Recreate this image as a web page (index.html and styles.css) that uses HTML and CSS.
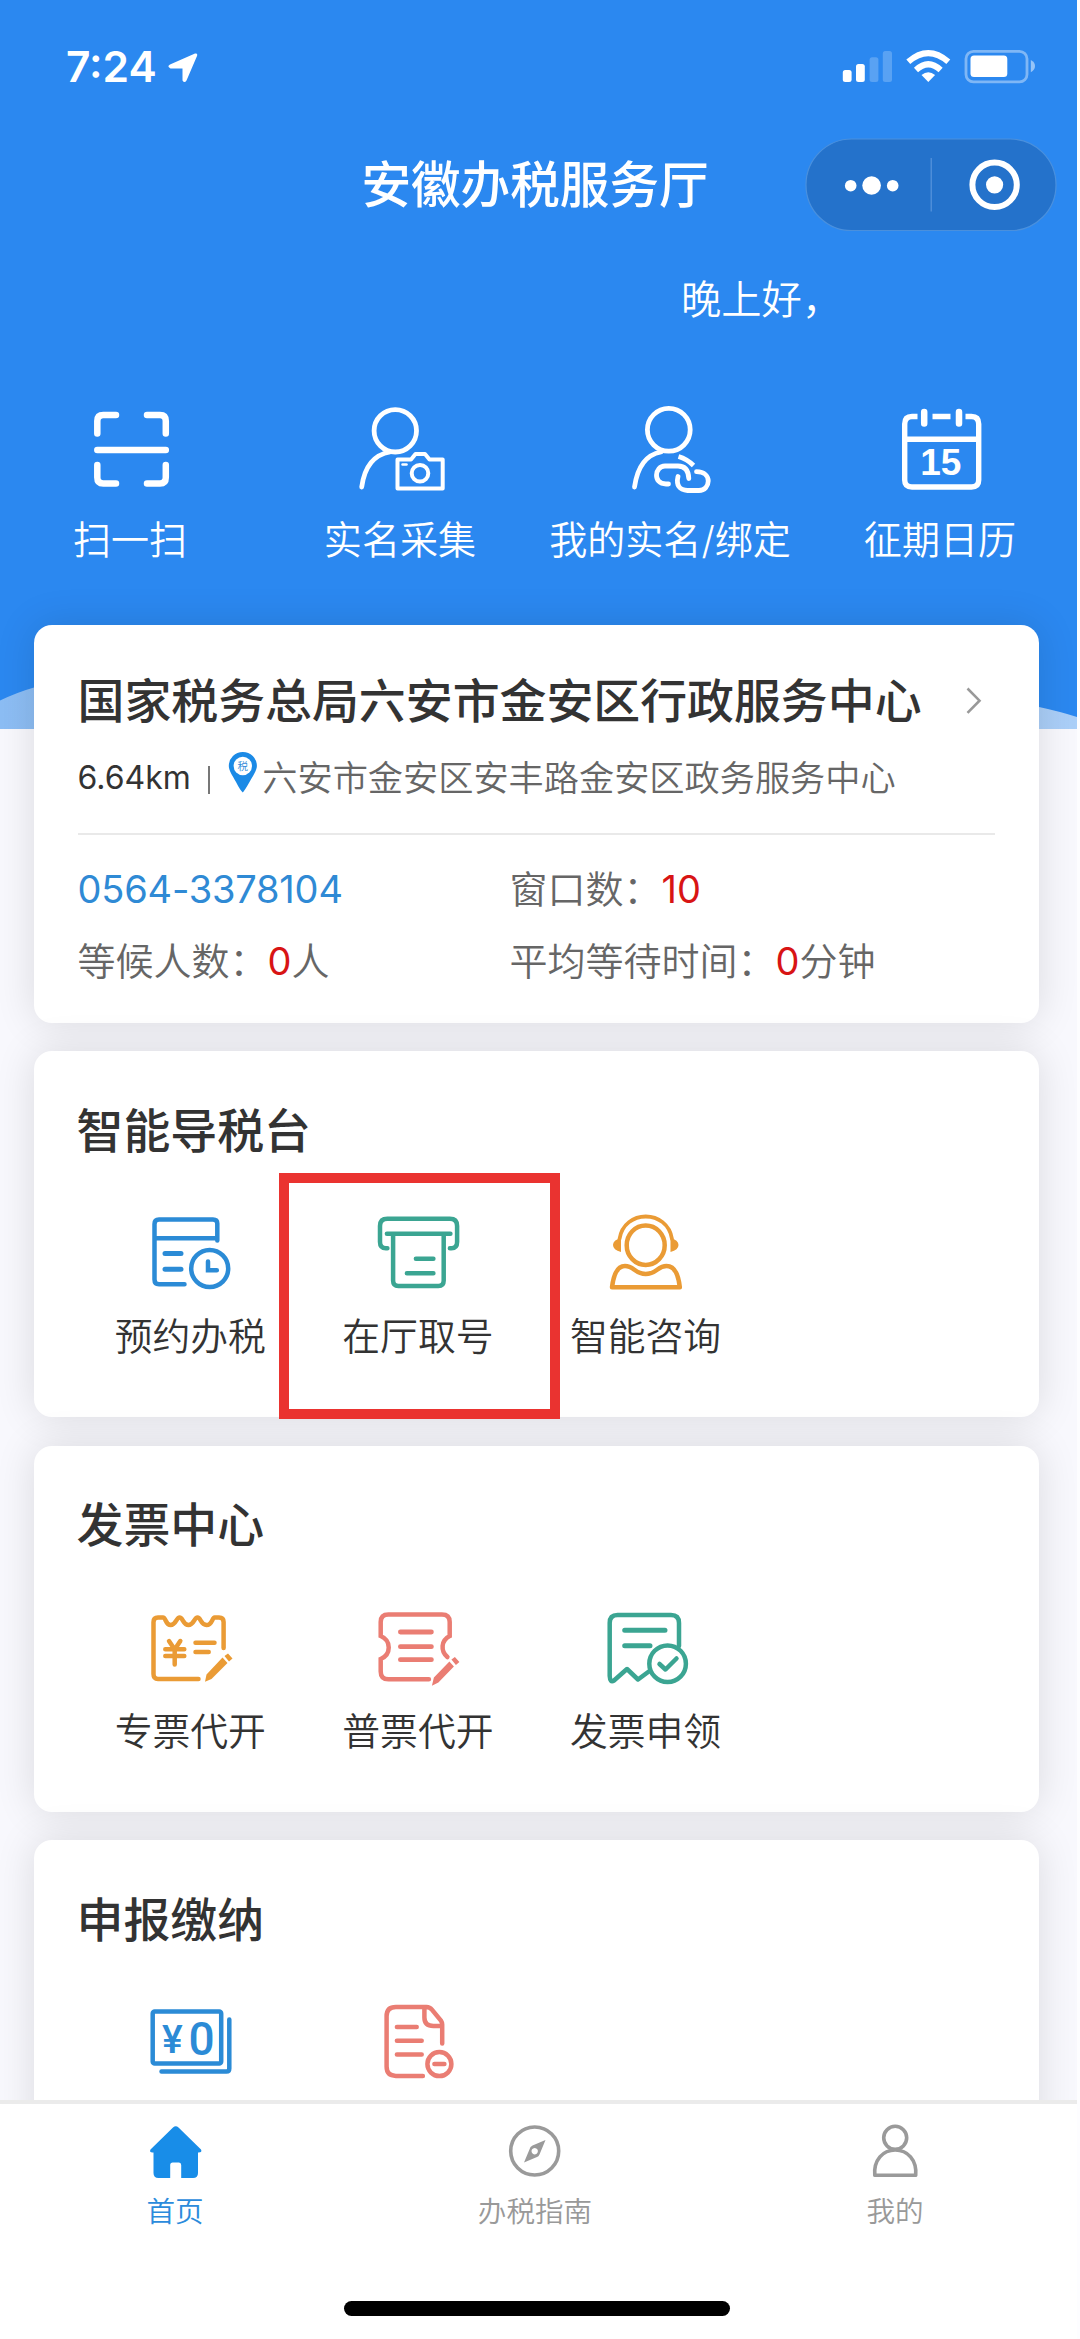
FILE: index.html
```html
<!DOCTYPE html>
<html lang="zh-CN">
<head>
<meta charset="utf-8">
<title>安徽办税服务厅</title>
<link rel="stylesheet" href="styles.css">
</head>
<body>
<div class="screen">
  <main class="content">
    <header class="hero">
      <svg class="wave" viewBox="0 0 1077 50" preserveAspectRatio="none">
        <defs><linearGradient id="wave-fill" x1="0" x2="1" y1="0" y2="0"><stop offset="0" stop-color="#8cbdf4"/><stop offset="1" stop-color="#abcff8"/></linearGradient></defs>
        <path d="M0 21.500Q18 13 34 8.500L200 0H960L1039 28Q1060 32.500 1077 38V50H0Z" fill="url(#wave-fill)"/>
      </svg>
      <div class="statusbar">
        <div class="clock">7:24
          <svg class="locate" viewBox="167 51 30 30"><path d="M194 52.500Q197 52 196 55L185.500 79.500Q183.500 82.500 181.500 79.500V67.500H169.500Q165.500 65.500 169 63.500Z" fill="#fff"/></svg>
        </div>
        <svg class="indicators" viewBox="842 48 195 37">
          <g fill="#fff">
            <rect x="842.800" y="70" width="8.800" height="12" rx="2.500"/>
            <rect x="856" y="64" width="8.800" height="18" rx="2.500"/>
            <rect x="869.600" y="57.300" width="8.800" height="24.700" rx="2.500" opacity=".22"/>
            <rect x="882.800" y="51" width="9.200" height="31" rx="2.500" opacity=".22"/>
            <path d="M928.300 82L921.500 75Q928.300 69.500 935.100 75Z"/>
          </g>
          <g fill="none" stroke="#fff" stroke-width="6">
            <path d="M908.300 61.800Q928.300 44.500 948.300 61.800"/>
            <path d="M916 70Q928.300 58.500 940.600 70"/>
          </g>
          <rect x="966" y="51.300" width="61" height="30.600" rx="7.500" fill="none" stroke="#fff" stroke-opacity=".4" stroke-width="2.800"/>
          <rect x="970.500" y="55.600" width="36.800" height="21.400" rx="3.500" fill="#fff"/>
          <path d="M1030.800 60Q1035 62 1035 66T1030.800 72.300Z" fill="#fff" opacity=".5"/>
        </svg>
      </div>
      <div class="navbar">
        <h1 class="nav-title">安徽办税服务厅</h1>
        <svg class="capsule" viewBox="805 137.500 252 93.500">
          <rect x="806" y="138.500" width="250" height="91.700" rx="45.800" fill="#2472cb" stroke="#4a90dd" stroke-width="1.200"/>
          <path d="M931.200 157.500V211" stroke="#5895dc" stroke-width="1.200"/>
          <g fill="#fff"><circle cx="850.700" cy="185.200" r="5.800"/><circle cx="871.600" cy="185" r="9.300"/><circle cx="892.700" cy="185.200" r="5.800"/><circle cx="994.600" cy="184.300" r="8.600"/></g>
          <circle cx="994.600" cy="184.300" r="22.200" fill="none" stroke="#fff" stroke-width="6"/>
        </svg>
      </div>
      <p class="greeting">晚上好，</p>
      <nav class="quick">
        <a class="quick-item">
          <svg class="icon" viewBox="80 405 100 90" stroke-width="6.500">
            <path d="M97.300 433.500V421Q97.300 415 103.300 415H116M147 415H160Q165.800 415 165.800 421V433.500M97.300 465V477.500Q97.300 483.500 103.300 483.500H116M147 483.500H160Q165.800 483.500 165.800 477.500V465M97.300 450H165.800"/>
          </svg>
          <span>扫一扫</span>
        </a>
        <a class="quick-item">
          <svg class="icon" viewBox="350 405 100 90" stroke-width="4.800">
            <circle cx="395.300" cy="430.800" r="21.200"/>
            <path d="M361.700 487Q366 456 390 452"/>
            <path d="M397.500 459.500H411L415.500 454H425L429.500 459.500H442.700V488.500H397.500Z" stroke-width="4" stroke-linejoin="round"/>
            <circle cx="420" cy="473.300" r="8.300" stroke-width="4"/>
            <path d="M402.500 464.500H406.500" stroke-width="2.500"/>
          </svg>
          <span>实名采集</span>
        </a>
        <a class="quick-item">
          <svg class="icon" viewBox="620 405 100 90" stroke-width="4.800">
            <circle cx="668.800" cy="429.800" r="21.400"/>
            <path d="M634.500 487Q639 456 661 452"/>
            <path d="M678.500 456.500Q687 459 693.500 465.500" stroke-linecap="butt"/>
            <path d="M668.500 484H666C652.500 484 654.500 466 665 466H678Q688.300 466 688.800 478.500M696.500 471.700C713 471.700 710.500 490.500 699 490.500H687.500Q675 489.500 678 476.500"/>
          </svg>
          <span>我的实名/绑定</span>
        </a>
        <a class="quick-item">
          <svg class="icon" viewBox="890 405 100 90" stroke-width="5.400">
            <path d="M917.500 416.500H912Q904.700 416.500 904.700 424V480Q904.700 487 912 487H971.500Q978.700 487 978.700 480V424Q978.700 416.500 971.500 416.500H965.500M905 439.300H978.500M932.500 416.500H950.500" stroke-linecap="butt"/>
            <path d="M924.200 412V423.500M959 412V423.500" stroke-width="6.500"/>
            <text class="calendar-day" x="940.800" y="474.600">15</text>
          </svg>
          <span>征期日历</span>
        </a>
      </nav>
    </header>

    <div class="cards">
      <section class="card office">
        <div class="office-head">
          <h2 class="office-name">国家税务总局六安市金安区行政服务中心</h2>
          <svg class="chevron" viewBox="965 687 18 30"><path d="M967.500 689.500L979.500 701.700L967.500 713.800" fill="none" stroke="#999" stroke-width="2.600"/></svg>
        </div>
        <div class="office-address">
          <span class="distance">6.64km</span>
          <i class="bar"></i>
          <svg class="pin" viewBox="228 751 30 42">
            <path d="M242.800 792.500Q240 790 236 782C232 775 228.800 770 228.800 766A14 14 0 0 1 256.900 766C256.900 770 253 776 249.500 782Q245 790 242.800 792.500Z" fill="#1b8ae6"/>
            <circle cx="242.800" cy="766" r="9.200" fill="#fff"/>
            <text x="242.800" y="770" class="pin-text">税</text>
          </svg>
          <span>六安市金安区安丰路金安区政务服务中心</span>
        </div>
        <div class="office-stats">
          <a class="phone">0564-3378104</a>
          <span>窗口数：<b>10</b></span>
          <span>等候人数：<b>0</b>人</span>
          <span>平均等待时间：<b>0</b>分钟</span>
        </div>
      </section>

      <section class="card">
        <h2 class="card-title">智能导税台</h2>
        <div class="services">
          <a class="service blue">
            <svg class="icon" viewBox="140 1207 100 90" stroke-linecap="butt">
              <path d="M217.300 1240.500V1223.500Q217.300 1219.500 213 1219.500H159Q154.500 1219.500 154.500 1224V1279.500Q154.500 1284.300 159 1284.300H184.500M155 1238.300H217"/>
              <path d="M165 1253.600H181M165 1269.300H181" stroke-width="5"/>
              <circle cx="209.700" cy="1268.500" r="18.500"/>
              <path d="M208 1261.500V1270.300H216.800"/>
            </svg>
            <span>预约办税</span>
          </a>
          <a class="service green">
            <svg class="icon" viewBox="367.600 1207 100 90">
              <path d="M387 1248.200H385.500Q379.600 1248.200 379.600 1242V1226Q379.600 1218.800 387 1218.800H449.500Q456.700 1218.800 456.700 1226V1242Q456.700 1248.200 451 1248.200H449.500M386.500 1233.800H450M392.700 1235V1280.500Q392.700 1286 398 1286H438Q443.300 1286 443.300 1280.500V1235M415.500 1258.800H433M406.500 1273.200H433"/>
            </svg>
            <span>在厅取号</span>
          </a>
          <a class="service orange">
            <svg class="icon" viewBox="595 1207 100 90">
              <ellipse cx="645.700" cy="1245.200" rx="19" ry="19.700"/>
              <path d="M619.500 1239C624 1209 667.500 1209 672 1239" stroke-width="3.800"/>
              <path d="M621 1238Q613 1240 613 1245T621 1252ZM670.500 1238Q678.500 1240 678.500 1245T670.500 1252Z" fill="currentColor" stroke="none"/>
              <path d="M612 1287.300C613.500 1275 617 1266 625 1266C634 1266 635 1274 645.700 1274C656.500 1274 657.500 1266 666.500 1266C674.500 1266 678.500 1275 679.800 1287.300Z" stroke-linejoin="round"/>
            </svg>
            <span>智能咨询</span>
          </a>
        </div>
      </section>

      <section class="card">
        <h2 class="card-title">发票中心</h2>
        <div class="services">
          <a class="service orange">
            <svg class="icon" viewBox="140 1602 100 90" stroke-linecap="butt">
              <path d="M223.600 1648V1622Q223.600 1617.500 219 1617.500H214.500C212 1617.500 212.500 1625 206.500 1625S201 1617.500 197.500 1617.500S194 1625 188.500 1625S183 1617.500 179.600 1617.500S176 1625 170.700 1625S166 1617.500 163 1617.500H158Q153.500 1617.500 153.500 1622V1674Q153.500 1679 158 1679H198.500" stroke-linejoin="round"/>
              <path d="M169 1641L174.700 1649.500L180.300 1641M174.700 1649V1664.500M165.300 1649.300H184.300M165.300 1656H184.300"/>
              <path d="M195.500 1642.700H214.500M195.500 1652H208.700"/>
              <path d="M205 1681.700L206.500 1674.500L222.500 1657.500L227.500 1663L211.500 1679ZM224.500 1656L228 1653.500L232.500 1658.500L229 1661.500Z" fill="currentColor" stroke="none"/>
            </svg>
            <span>专票代开</span>
          </a>
          <a class="service red">
            <svg class="icon" viewBox="367.600 1602 100 90" stroke-linecap="butt">
              <path d="M428.500 1679.300H388Q380.300 1679.300 380.300 1671.500V1659C391 1654.500 391 1640.500 380.300 1636V1622Q380.300 1614.500 388 1614.500H441.500Q449.300 1614.500 449.300 1622V1636C440.500 1640.500 440 1651 447 1657"/>
              <path d="M400 1632H431M400 1646.700H431M400 1659.700H431" stroke-width="4.800"/>
              <path d="M431.500 1685.700L433.500 1677.500L449 1661.500L453.500 1666.500L438 1682.500ZM451 1659.500L454.500 1657L459 1662L455.500 1665Z" fill="currentColor" stroke="none"/>
            </svg>
            <span>普票代开</span>
          </a>
          <a class="service green">
            <svg class="icon" viewBox="595 1602 100 90" stroke-linecap="butt">
              <path d="M679 1646V1623Q679 1615 671 1615H617.500Q609.700 1615 609.700 1623V1676Q610 1683 614 1680.500L627 1669L638 1679.500L649.500 1671" stroke-linejoin="round"/>
              <path d="M624.700 1630.300H665M624.700 1645.700H650" stroke-width="5"/>
              <circle cx="667.600" cy="1663.700" r="18.300"/>
              <path d="M659.500 1664L665.500 1669.500L676.500 1658.500" stroke-linecap="round" stroke-linejoin="round"/>
            </svg>
            <span>发票申领</span>
          </a>
        </div>
      </section>

      <section class="card">
        <h2 class="card-title">申报缴纳</h2>
        <div class="services">
          <a class="service blue">
            <svg class="icon" viewBox="140 1996.400 100 90">
              <rect x="152.700" y="2012" width="68.500" height="52" rx="2"/>
              <path d="M229.300 2020V2069Q229.300 2072 226.500 2072H161.500"/>
              <text class="bill"><tspan class="bill-yen" x="162" y="2053.500">¥</tspan><tspan x="188.500" y="2055.800">0</tspan></text>
            </svg>
          </a>
          <a class="service red">
            <svg class="icon" viewBox="367.600 1996.400 100 90">
              <path d="M422.500 2076.300H395.500Q386.200 2076.300 386.200 2067V2016.500Q386.200 2007.300 395.500 2007.300H426Q429.500 2007.500 431.500 2010L440.500 2021Q441.800 2023 441.800 2025V2044M424 2009V2018Q424 2026.500 433 2026.500H441"/>
              <path d="M396.500 2027.500H416.300M396.500 2041.200H421.300M396.500 2055H421.300"/>
              <circle cx="439" cy="2064.500" r="12"/>
              <path d="M434 2064.500H444"/>
            </svg>
          </a>
        </div>
      </section>
    </div>
    <div class="highlight"></div>
  </main>

  <footer class="tabbar">
    <nav class="tabs">
      <a class="tab active">
        <svg class="tab-icon" viewBox="145.500 2122 60 60"><path d="M173.500 2127.500Q176.300 2125 179 2127.500L201.500 2149.500Q203 2152.500 199 2152.500H198.500V2173Q198.500 2178 193.500 2178H181.700V2165Q181.700 2162.500 179.500 2162.500H173.200Q170.700 2162.500 170.700 2165V2178H159Q154 2178 154 2173V2152.500H153Q149.500 2152.500 151 2149.500Z" fill="#188de8"/></svg>
        <span>首页</span>
      </a>
      <a class="tab">
        <svg class="tab-icon" viewBox="505.500 2122 60 60"><circle cx="535.200" cy="2151" r="24" fill="none" stroke="#9a9a9a" stroke-width="3.600"/><path fill="#9a9a9a" fill-rule="evenodd" d="M524.500 2162.500L531 2147Q532 2146 533 2145.500L546 2140L540 2154.500Q539 2156.500 537.500 2157ZM535.200 2148A3.200 3.200 0 1 0 535.210 2148Z"/></svg>
        <span>办税指南</span>
      </a>
      <a class="tab">
        <svg class="tab-icon" viewBox="865.500 2122 60 60"><g fill="none" stroke="#9a9a9a" stroke-width="3.600"><circle cx="895.700" cy="2137.800" r="11.500"/><path d="M875.300 2175.300H916.200C917.500 2160 908 2150 895.700 2150S874 2160 875.300 2175.300Z" stroke-linejoin="round"/></g></svg>
        <span>我的</span>
      </a>
    </nav>
    <div class="home-indicator"></div>
  </footer>
</div>
</body>
</html>
```

FILE: styles.css
```css
* {
  box-sizing: border-box;
}

body {
  margin: 0;
  background: #fdfdff;
  font-family: Inter, "Noto Sans CJK SC", sans-serif;
  font-weight: 350;
  color: #333;
}

h1,
h2,
p {
  margin: 0;
}

svg {
  display: block;
  flex: none;
}

.screen {
  display: flex;
  flex-direction: column;
  width: 1077px;
  height: 2339px;
  overflow: hidden;
  background: #f8f8fd;
}

.content {
  position: relative;
  height: 2100px;
  overflow: hidden;
}

/* Header */

.hero {
  position: relative;
  height: 729px;
  background: #2b88f0;
  color: #fff;
}

.wave {
  position: absolute;
  left: 0;
  bottom: 0;
  width: 100%;
  height: 50px;
}

.statusbar {
  display: flex;
  justify-content: space-between;
  align-items: flex-start;
  height: 134px;
  padding: 48px 40px 0 66px;
}

.clock {
  display: flex;
  align-items: center;
  gap: 11px;
  height: 37px;
  font-size: 42.5px;
  line-height: 37px;
  font-weight: 600;
}

.locate {
  width: 30px;
  height: 30px;
}

.indicators {
  width: 195px;
  height: 37px;
}

.navbar {
  display: grid;
  grid-template-columns: 1fr auto 1fr;
  align-items: center;
  height: 101px;
  padding: 0 20px 0 13px;
}

.nav-title {
  grid-column: 2;
  padding-top: 1px;
  font-size: 49.6px;
  line-height: 60px;
  font-weight: 500;
}

.capsule {
  justify-self: end;
  width: 252px;
  height: 93.5px;
}

.greeting {
  margin-top: 35px;
  padding-left: 681px;
  font-size: 40.3px;
  line-height: 60px;
}

.quick {
  display: grid;
  grid-template-columns: repeat(4, 270px);
  width: 1080px;
  margin: 75px 0 0 -5px;
}

.quick-item {
  display: flex;
  flex-direction: column;
  align-items: center;
  gap: 20px;
  font-size: 38.1px;
  line-height: 50px;
  white-space: nowrap;
}

.icon {
  width: 100px;
  height: 90px;
  fill: none;
  stroke: currentColor;
  stroke-linecap: round;
}

.calendar-day {
  fill: #fff;
  stroke: none;
  font: bold 37px "Liberation Sans", sans-serif;
  text-anchor: middle;
}

/* Cards */

.cards {
  position: relative;
  display: flex;
  flex-direction: column;
  gap: 28.6px;
  margin-top: -104px;
  padding: 0 38.5px 0 34px;
}

.card {
  flex: none;
  height: 366px;
  padding: 49.5px 43.5px 0 43.5px;
  border-radius: 18px;
  background: #fff;
  box-shadow: 0 0 40px rgba(0, 0, 0, 0.12);
}

.office {
  height: 397.6px;
  padding-top: 46px;
}

.office-head {
  display: flex;
  justify-content: space-between;
  align-items: center;
  height: 60px;
  padding-right: 12px;
}

.office-name,
.card-title {
  font-size: 46.9px;
  line-height: 60px;
  font-weight: 500;
  white-space: nowrap;
}

.card-title {
  margin-left: -1px;
}

.chevron {
  width: 18px;
  height: 30px;
}

.office-address {
  display: flex;
  align-items: center;
  height: 62px;
  margin-top: 16px;
  font-size: 35.2px;
  line-height: 60px;
  color: #666;
  white-space: nowrap;
}

.distance {
  font-size: 32px;
  font-weight: 400;
  color: #333;
}

.bar {
  width: 2.5px;
  height: 28px;
  margin: 4px 18px 0 17px;
  background: #777;
}

.pin {
  width: 30px;
  height: 42px;
  margin: -12px 4px 0 0;
}

.pin-text {
  font-size: 10.5px;
  fill: #2f8ad8;
  text-anchor: middle;
}

.office-stats {
  display: grid;
  grid-template-columns: 432px 1fr;
  grid-auto-rows: 72px;
  align-items: center;
  margin-top: 24px;
  padding-top: 18px;
  border-top: 2.5px solid #e9e9e9;
  font-size: 38px;
  line-height: 50px;
  color: #666;
  white-space: nowrap;
}

.office-stats b {
  font-weight: 400;
  color: #d81414;
}

.phone {
  font-weight: 400;
  letter-spacing: -0.2px;
  color: #2f8ad5;
}

.services {
  display: grid;
  grid-template-columns: repeat(4, 227.6px);
  margin-top: 46.5px;
  margin-left: -1px;
}

.service {
  display: flex;
  flex-direction: column;
  align-items: center;
  gap: 14px;
  font-size: 37.8px;
  line-height: 50px;
  white-space: nowrap;
}

.service .icon {
  stroke-width: 4.5px;
}

.service span {
  color: #333;
}

.blue {
  color: #2b8bd6;
}

.green {
  color: #3ba592;
}

.orange {
  color: #ea9b35;
}

.red {
  color: #ea7d73;
}

.bill {
  fill: currentColor;
  stroke: none;
  font: 500 46px Roboto, sans-serif;
}

.bill-yen {
  font-size: 39px;
}

.highlight {
  position: absolute;
  left: 279.3px;
  top: 1173px;
  width: 281px;
  height: 245.6px;
  border: 10px solid #ea3330;
}

/* Bottom bar */

.tabbar {
  flex: 1;
  display: flex;
  flex-direction: column;
  align-items: center;
  border-top: 4px solid #ebebeb;
  background: #fff;
}

.tabs {
  display: grid;
  grid-template-columns: repeat(3, 360px);
  width: 1080px;
  margin-left: -7px;
  padding-top: 18px;
}

.tab {
  display: flex;
  flex-direction: column;
  align-items: center;
  gap: 10px;
  font-size: 28.6px;
  line-height: 40px;
  color: #999;
}

.tab-icon {
  width: 60px;
  height: 60px;
}

.tab.active {
  color: #2b8bdc;
}

.home-indicator {
  width: 386px;
  height: 15px;
  margin: 69px 4px 0 0;
  border-radius: 8px;
  background: #000;
}
```
